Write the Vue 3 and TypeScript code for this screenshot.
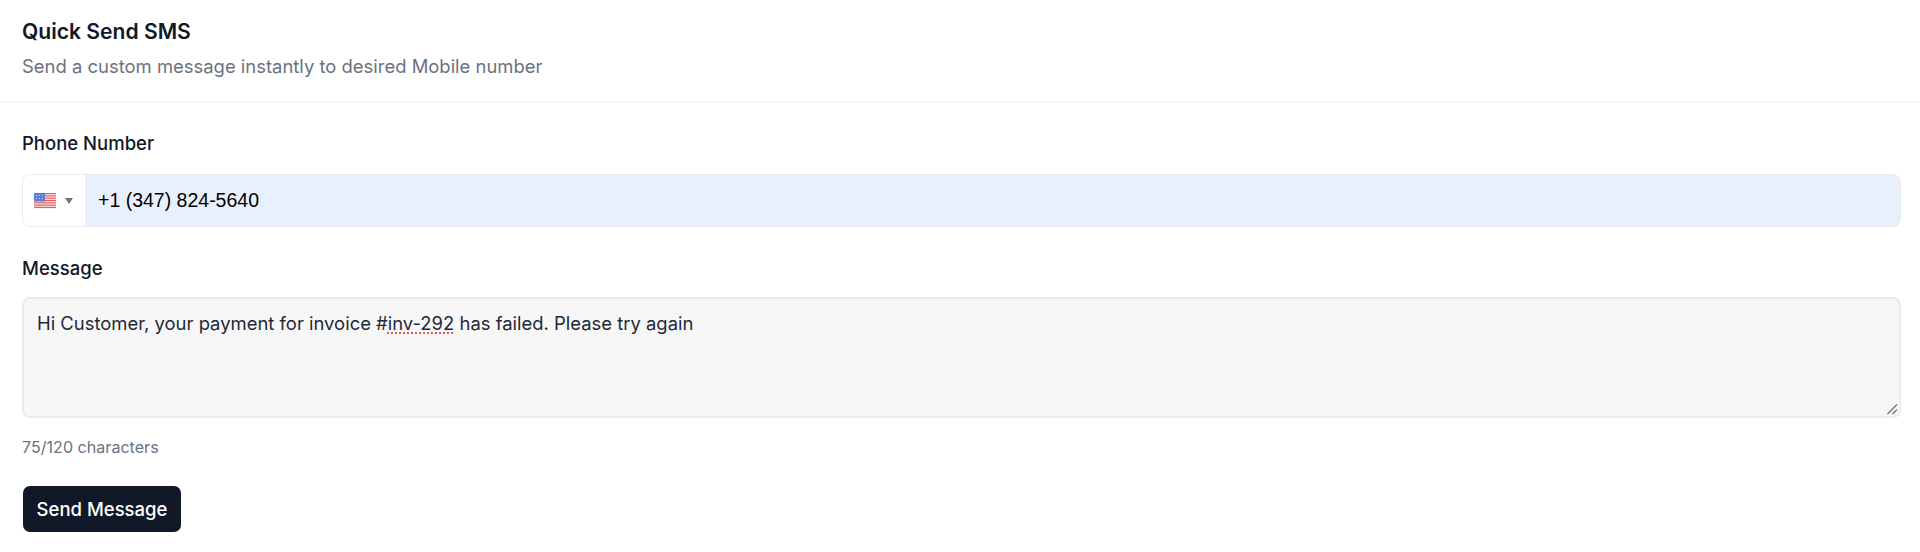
<script setup lang="ts">
const title = 'Quick Send SMS'
const stripes: number[] = [0, 2.3, 4.6, 6.9, 9.2, 11.5, 13.8]
</script>

<template>
  <section class="card">
    <header class="head">
      <h2 class="title">{{ title }}</h2>
      <p class="sub">Send a custom message instantly to desired Mobile number</p>
    </header>
    <form class="body" @submit.prevent>
      <label class="label">Phone Number</label>
      <div class="phone">
        <div class="country">
          <svg class="flag" width="22" height="16" viewBox="0 0 22 16">
            <rect width="22" height="16" fill="#fbeeee" />
            <rect v-for="s in stripes" :key="s" x="0" :y="s" width="22" height="1.2" fill="#e0625f" />
            <rect width="11" height="8.5" fill="#5b7fd8" />
            <g fill="#c9d6f5">
              <rect x="2" y="2" width="1" height="1" /><rect x="5" y="2" width="1" height="1" /><rect x="8" y="2" width="1" height="1" />
              <rect x="2" y="5" width="1" height="1" /><rect x="5" y="5" width="1" height="1" /><rect x="8" y="5" width="1" height="1" />
            </g>
          </svg>
          <span class="caret"></span>
        </div>
        <input class="tel" type="tel" value="+1 (347) 824-5640" />
      </div>
      <label class="label label-msg">Message</label>
      <div class="msg">
        Hi Customer, your payment for invoice #<span class="typo">inv-292</span> has failed. Please try again
        <svg class="grip" width="12" height="12" viewBox="0 0 12 12">
          <path d="M1.5 11 11 1.5M6.5 11 11 6.5" stroke="#6b6b6b" stroke-width="1.1" fill="none" />
        </svg>
      </div>
      <p class="count">75/120 characters</p>
      <button class="send" type="submit">Send Message</button>
    </form>
  </section>
</template>

<style>
html, body { margin: 0; background: #fff; }
</style>

<style scoped>
.card {
  font-family: Inter, "Liberation Sans", sans-serif;
  color: #111827;
  width: 1920px;
  height: 552px;
  box-sizing: border-box;
  background: #fff;
}
.head {
  height: 102px;
  box-sizing: border-box;
  padding: 20px 22px 0;
  border-bottom: 1px solid #f3f4f6;
}
.title {
  margin: 0;
  font-size: 21.1px;
  line-height: 24px;
  font-weight: 600;
  color: #111827;
}
.sub {
  margin: 10px 0 0;
  font-size: 18.45px;
  line-height: 24px;
  color: #6b7280;
}
.body {
  padding: 30px 19px 0 22px;
  display: flex;
  flex-direction: column;
  align-items: stretch;
}
.label {
  font-size: 18.5px;
  line-height: 22px;
  font-weight: 500;
  color: #111827;
}
.label-msg { margin-top: 30px; }
.phone {
  display: flex;
  height: 53px;
  margin-top: 20px;
  box-sizing: border-box;
  border: 1px solid #e8ecf2;
  border-radius: 8px;
  overflow: hidden;
  background: #e8f0fe;
}
.country {
  width: 62px;
  flex: none;
  background: #fff;
  display: flex;
  align-items: center;
  gap: 9px;
  padding-left: 11px;
  box-sizing: border-box;
}
.flag { flex: none; }
.caret {
  width: 0;
  height: 0;
  border-left: 4.5px solid transparent;
  border-right: 4.5px solid transparent;
  border-top: 6px solid #6b7280;
}
.tel {
  flex: 1;
  border: 0;
  outline: 0;
  background: transparent;
  font-family: "Liberation Sans", Arial, sans-serif;
  font-size: 19.5px;
  color: #000;
  padding: 0 13px;
}
.msg {
  position: relative;
  height: 121px;
  margin-top: 18px;
  box-sizing: border-box;
  padding: 12px 13px;
  background: #f7f7f7;
  border: 2px solid #ebebec;
  border-radius: 8px;
  font-size: 18.45px;
  line-height: 24px;
  color: #1f2937;
}
.typo {
  text-decoration: underline dotted #e5484d;
  text-underline-offset: 3px;
}
.grip { position: absolute; right: 1px; bottom: 1px; }
.count {
  margin: 19px 0 0;
  font-size: 16.1px;
  line-height: 20px;
  color: #6b7280;
}
.send {
  align-self: flex-start;
  margin: 29px 0 0 1px;
  width: 158px;
  height: 46px;
  border: 0;
  border-radius: 7px;
  background: #111827;
  color: #fff;
  font: inherit;
  font-size: 18.5px;
  font-weight: 500;
  padding: 0;
}
</style>
